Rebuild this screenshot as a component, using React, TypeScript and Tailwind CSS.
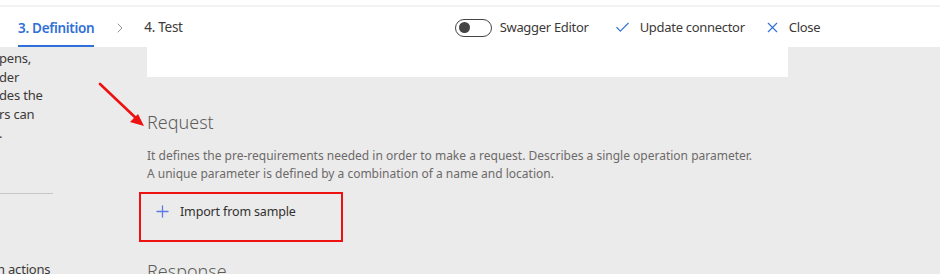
import { Check, X, ChevronRight, Plus } from 'lucide-react';

const font = { fontFamily: '"Noto Sans", "Open Sans", sans-serif' };

const sideLines = ['pens,', 'der', 'des the', 'rs can', '.'];

function Header() {
  return (
    <div className="bg-white">
      <div className="h-[5px]" />
      <div className="h-[2px] bg-[#f3f3f3]" />
      <div className="flex h-[40px] items-stretch text-[13px] tracking-[-0.3px]">
        <div className="ml-[18px] flex flex-col justify-end">
          <span className="text-[13.5px] font-semibold leading-[20px] text-[#2f6fd8]">3. Definition</span>
          <div className="mt-[7px] h-[2px] bg-[#2f6fd8]" />
        </div>
        <div className="ml-[18px] flex items-center pt-[1px] text-[#8a8886]">
          <ChevronRight size={16} strokeWidth={1.4} />
        </div>
        <div className="ml-[16px] flex items-center pt-[1px] text-[13.5px] text-[#3b3a39]">4. Test</div>

        <div className="ml-[272px] flex items-center gap-[8px] pt-[1px]">
          <span className="flex h-[18px] w-[37px] items-center rounded-full border border-[#444] px-[3px]">
            <span className="h-[11px] w-[11px] rounded-full bg-[#444]" />
          </span>
          <span className="text-[#3b3a39]">Swagger Editor</span>
        </div>
        <div className="ml-[25px] flex items-center gap-[9px] pt-[1px]">
          <Check size={17} strokeWidth={1.6} className="text-[#2f6fd8]" />
          <span className="text-[#3b3a39]">Update connector</span>
        </div>
        <div className="ml-[19px] flex items-center gap-[8px] pt-[1px]">
          <X size={17} strokeWidth={1.6} className="text-[#2f6fd8]" />
          <span className="text-[#3b3a39]">Close</span>
        </div>
      </div>
    </div>
  );
}

function Side() {
  return (
    <div className="w-[147px] shrink-0 overflow-hidden text-[13px] tracking-[-0.2px] text-[#3b3a39]">
      <div className="pt-[2px] leading-[18.7px]">
        {sideLines.map((l, i) => (
          <div key={i} className="-ml-[1px] whitespace-nowrap">{l}</div>
        ))}
      </div>
      <div className="mt-[50px] h-[1px] w-[53px] bg-[#c8c6c4]" />
      <div className="mt-[66px] -ml-[3px] whitespace-nowrap leading-[18px]">n actions</div>
    </div>
  );
}

export default function App() {
  return (
    <div className="relative h-[274px] w-[940px] overflow-hidden bg-[#ebebeb]" style={font}>
      <Header />
      <div className="flex">
        <Side />
        <div className="flex-1">
          <div className="h-[30px] w-[641px] bg-white" />
          <h2 className="mt-[33px] text-[18px] font-light leading-[24px] text-[#605e5c]">Request</h2>
          <p className="mt-[13px] text-[12px] leading-[18px] text-[#6b6a69]">
            It defines the pre-requirements needed in order to make a request. Describes a single operation parameter.
            <br />
            A unique parameter is defined by a combination of a name and location.
          </p>
          <div className="-ml-[8px] mt-[9px] flex h-[50px] w-[204px] items-start border-2 border-[#ee1111] pl-[12px] pt-[7px]">
            <Plus size={19} strokeWidth={1.6} className="mt-[1px] text-[#5a7ae6]" />
            <span className="ml-[8px] text-[12.5px] leading-[22px] tracking-[-0.15px] text-[#323130]">Import from sample</span>
          </div>
          <h2 className="mt-[17px] text-[18px] font-light leading-[24px] text-[#605e5c]">Response</h2>
        </div>
      </div>

      {/* annotation arrow */}
      <svg className="absolute left-[96px] top-[80px]" width="52" height="52" viewBox="0 0 52 52">
        <line x1="4" y1="4" x2="42" y2="40" stroke="#ee1111" strokeWidth="2.6" strokeLinecap="round" />
        <polygon points="48,46 34,42 42,34" fill="#ee1111" />
      </svg>
    </div>
  );
}
